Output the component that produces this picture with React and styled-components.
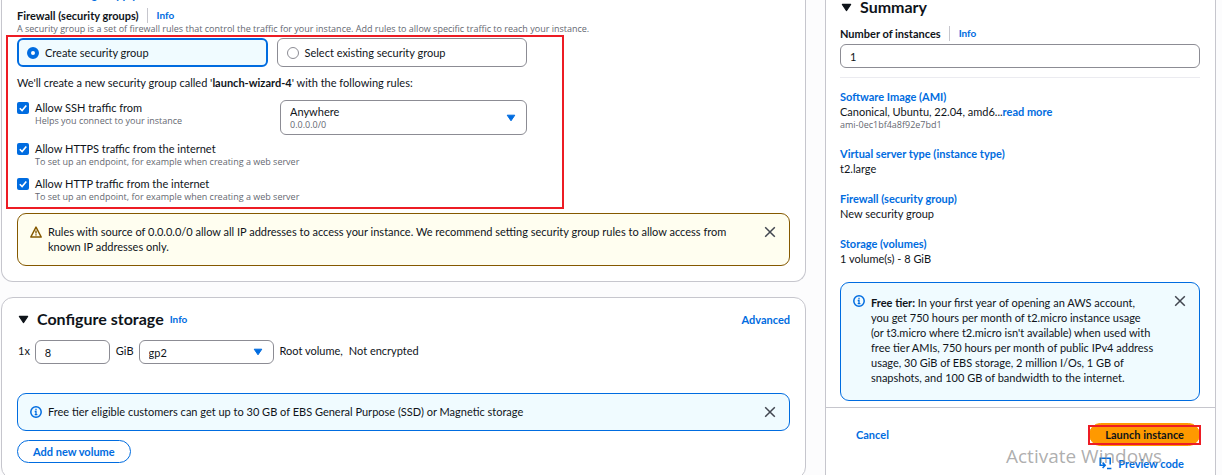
import React from "react";
import styled, { createGlobalStyle, css } from "styled-components";

const blue = "#006ce0";
const grey = "#656871";
const line = "#c6c6cd";
const inputLine = "#8c8c94";
const annotation = "#ed1c24";

const GlobalStyle = createGlobalStyle`
  *, *::before, *::after { box-sizing: border-box; }
  html, body { margin: 0; background: #fcfcfd; }
  body, button, input, select {
    font-family: "Amazon Ember", Lato, "Open Sans", sans-serif;
    font-size: 11px;
    line-height: 15px;
    color: #0f141a;
  }
  a { color: ${blue}; text-decoration: none; font-weight: 700; }
  p, h2, h3, dl, dd, dt { margin: 0; }
`;

const Page = styled.div`
  position: relative;
  display: grid;
  grid-template-columns: minmax(0, 1fr) 391px;
  gap: 19px;
  height: 100vh;
  overflow: hidden;
  padding: 0 6px 0 1px;
`;

const Column = styled.main`
  display: flex;
  flex-direction: column;
  gap: 15px;
`;

const Card = styled.section`
  flex: none;
  position: relative;
  background: #fff;
  border: 1px solid ${line};
  border-radius: 12px;
  padding: 12px 15px 15px;
  ${(p) => p.$continued && css`
    border-top: 0;
    border-radius: 0 0 12px 12px;
    padding-top: 0;
  `}
`;

const ScrolledLine = styled.div`
  display: flex;
  align-items: flex-end;
  height: 2px;
  margin-bottom: 6px;
  overflow: hidden;
`;

const FieldHeading = styled.div`
  display: flex;
  align-items: center;
  height: 15px;
`;

const FieldLabel = styled.label`
  font-weight: 700;
  padding-right: 8px;
  margin-right: 9px;
  border-right: 1px solid ${line};
`;

const InfoLink = styled.a`
  font-size: 10px;
`;

const Hint = styled.span`
  display: block;
  font-family: "Amazon Ember", "Open Sans", sans-serif;
  font-size: 9px;
  line-height: 12px;
  color: ${grey};
`;

const Tiles = styled.div`
  display: grid;
  grid-template-columns: 1fr 1fr;
  gap: 9px;
  max-width: 510px;
  margin: 3px 0 8px;
`;

const Tile = styled.label`
  display: flex;
  align-items: center;
  gap: 6px;
  height: 29px;
  padding: 0 9px;
  border: 1px solid ${inputLine};
  border-radius: 6px;
  ${(p) => p.$selected && css`
    background: #f0fbff;
    border: 2px solid ${blue};
    padding: 0 8px;
  `}
`;

const Radio = styled.input`
  appearance: none;
  flex: none;
  width: 12px;
  height: 12px;
  margin: 0;
  border: 1px solid ${inputLine};
  border-radius: 50%;
  background: #fff;
  &:checked { border: 4px solid ${blue}; }
`;

const Rules = styled.div`
  display: grid;
  grid-template-columns: 1fr 247px;
  row-gap: 6px;
  max-width: 510px;
  margin: 10px 0 8px;
`;

const Rule = styled.div`
  display: grid;
  grid-template-columns: 12px 1fr;
  column-gap: 6px;
  align-content: start;
  padding-bottom: 2px;
  ${(p) => p.$wide && css`grid-column: 1 / -1;`}
`;

const TickBox = styled.span`
  display: grid;
  width: 12px;
  height: 12px;
  margin-top: 2px;
  > * { grid-area: 1 / 1; }
  svg { pointer-events: none; }
`;

const TickInput = styled.input`
  appearance: none;
  width: 12px;
  height: 12px;
  margin: 0;
  border-radius: 2px;
  background: ${blue};
`;

const SelectBox = styled.div`
  display: grid;
  align-items: center;
  width: ${(p) => p.$width || "auto"};
  > * { grid-area: 1 / 1; }
  svg { justify-self: end; margin-right: 11px; pointer-events: none; }
`;

const Select = styled.select`
  appearance: none;
  width: 100%;
  height: ${(p) => (p.$tall ? 35 : 24)}px;
  margin: 0;
  padding: ${(p) => (p.$tall ? "0 9px 12px" : "0 9px")};
  border: 1px solid ${inputLine};
  border-radius: 6px;
  background: #fff;
`;

const SelectDetail = styled(Hint)`
  align-self: end;
  padding: 0 0 4px 10px;
  pointer-events: none;
`;

const Input = styled.input`
  width: ${(p) => p.$width || "100%"};
  height: 24px;
  padding: 0 9px;
  border: 1px solid ${inputLine};
  border-radius: 6px;
  background: #fff;
`;

const Alert = styled.div`
  display: flex;
  align-items: flex-start;
  gap: 6px;
  padding: 10px 12px 11px;
  border: 1px solid ${(p) => (p.$warning ? "#855900" : blue)};
  border-radius: 9px;
  background: ${(p) => (p.$warning ? "#fffef0" : "#f0fbff")};
  > svg { flex: none; margin-top: 2px; }
`;

const AlertText = styled.p`
  flex: 1;
  max-width: ${(p) => p.$max || "none"};
  ${(p) => p.$roomy && css`padding: 2px 0 4px;`}
`;

const CloseButton = styled.button`
  display: flex;
  margin: 2px 1px 0 auto;
  padding: 0;
  border: 0;
  background: none;
`;

const CardHeader = styled.header`
  display: flex;
  align-items: center;
  height: 18px;
  padding-left: 1px;
  h2 { font-size: 16px; line-height: 18px; margin: 0 6px 0 8px; }
  > a:last-child { margin-left: auto; }
`;

const VolumeRow = styled.div`
  display: flex;
  align-items: center;
  gap: 5px;
  margin: 12px 0 29px;
`;

const VolumeText = styled.span`
  padding: 0 0 4px 1px;
`;

const PillButton = styled.button`
  height: 23px;
  padding: 0 15px;
  border: 1px solid ${blue};
  border-radius: 12px;
  background: #fff;
  color: ${blue};
  font-weight: 700;
  white-space: nowrap;
  ${(p) => p.$primary && css`
    border-color: #ff9900;
    background: #ff9900;
    color: #0f141a;
  `}
`;

const AddRow = styled.div`
  margin-top: 9px;
`;

const Summary = styled.aside`
  position: relative;
  background: #fff;
  border: solid ${line};
  border-width: 0 1px;
`;

const SummaryBody = styled.div`
  padding: 0 15px 6px 14px;
`;

const SummaryHeader = styled(CardHeader)`
  height: 14px;
  margin-bottom: 12px;
`;

const CountInput = styled(Input)`
  display: block;
  margin-top: 3px;
`;

const Divider = styled.hr`
  height: 1px;
  margin: 9px 0 11px;
  border: 0;
  background: #ebebf0;
`;

const Facts = styled.dl`
  display: flex;
  flex-direction: column;
  gap: 15px;
  margin-bottom: 16px;
`;

const Footer = styled.footer`
  display: grid;
  grid-template-columns: 1fr auto;
  align-items: center;
  row-gap: 6px;
  padding: 15px 15px 0 30px;
  border-top: 1px solid ${line};
`;

const Marked = styled.span`
  position: relative;
  display: flex;
  &::after {
    content: "";
    position: absolute;
    inset: 2px -1px 1px -1px;
    border: 2px solid ${annotation};
    pointer-events: none;
  }
`;

const PreviewLink = styled.a`
  grid-column: 2;
  justify-self: end;
  display: flex;
  align-items: center;
  gap: 6px;
  padding-right: 16px;
  height: 23px;
`;

const RegionMark = styled.div`
  position: absolute;
  left: 4px;
  top: 35px;
  width: 558px;
  height: 174px;
  border: 2px solid ${annotation};
  pointer-events: none;
`;

const Watermark = styled.div`
  position: absolute;
  right: 6px;
  bottom: -18px;
  width: 210px;
  font-family: "Segoe UI", "Open Sans", sans-serif;
  color: rgba(130, 130, 130, 0.65);
  pointer-events: none;
  strong { display: block; font-size: 19px; line-height: 26px; font-weight: 400; }
  span { display: block; font-size: 13px; line-height: 24px; white-space: nowrap; }
`;

const Caret = ({ color = blue, size = 10 }) => (
  <svg width={size} height={size} viewBox="0 0 10 10" aria-hidden="true">
    <path d="M1.2 2.2h7.6L5 7.8z" fill={color} stroke={color} strokeWidth="1" strokeLinejoin="round" />
  </svg>
);

const Cross = () => (
  <svg width="12" height="12" viewBox="0 0 12 12" aria-hidden="true">
    <path d="M1.2 1.2l9.6 9.6M10.8 1.2L1.2 10.8" stroke="#424650" strokeWidth="1.5" fill="none" />
  </svg>
);

const InfoIcon = () => (
  <svg width="12" height="12" viewBox="0 0 12 12" aria-hidden="true">
    <circle cx="6" cy="6" r="5.2" fill="none" stroke={blue} strokeWidth="1.5" />
    <path d="M6 2.8v1.4M4.7 5.5H6v3.2M4.7 8.7h2.7" fill="none" stroke={blue} strokeWidth="1.3" />
  </svg>
);

const WarningIcon = () => (
  <svg width="12" height="12" viewBox="0 0 12 12" aria-hidden="true">
    <path d="M6 1.1L11.2 11H.8z" fill="none" stroke="#855900" strokeWidth="1.5" strokeLinejoin="round" />
    <path d="M6 4.4v3M6 8.2v1.4" stroke="#855900" strokeWidth="1.4" />
  </svg>
);

const CodeIcon = () => (
  <svg width="13" height="13" viewBox="0 0 13 13" aria-hidden="true">
    <path d="M11.2 7.5V1.2H1.2v7h4.6M3.6 5.6l2.6 2.6-2.6 2.8M8 11.6h4.4" fill="none" stroke={blue} strokeWidth="1.5" />
  </svg>
);

const Tick = ({ id }) => (
  <TickBox>
    <TickInput type="checkbox" id={id} defaultChecked />
    <svg width="12" height="12" viewBox="0 0 12 12" aria-hidden="true">
      <path d="M2.8 6.2l2.3 2.3 4.2-5" fill="none" stroke="#fff" strokeWidth="1.6" />
    </svg>
  </TickBox>
);

const TrafficRule = ({ id, label, hint, wide }) => (
  <Rule $wide={wide}>
    <Tick id={id} />
    <div>
      <label htmlFor={id}>{label}</label>
      <Hint>{hint}</Hint>
    </div>
  </Rule>
);

const Close = () => (
  <CloseButton type="button" aria-label="Dismiss"><Cross /></CloseButton>
);

const Fact = ({ name, children }) => (
  <div>
    <dt><a href="#">{name}</a></dt>
    <dd>{children}</dd>
  </div>
);

export default function App() {
  return (
    <>
      <GlobalStyle />
      <Page>
        <Column>
          <Card $continued>
            <ScrolledLine><a href="#">Additional charges apply</a></ScrolledLine>
            <FieldHeading>
              <FieldLabel as="span" id="firewall">Firewall (security groups)</FieldLabel>
              <InfoLink href="#">Info</InfoLink>
            </FieldHeading>
            <Hint>
              A security group is a set of firewall rules that control the traffic for your instance. Add rules to
              allow specific traffic to reach your instance.
            </Hint>
            <Tiles role="radiogroup" aria-labelledby="firewall">
              <Tile $selected>
                <Radio type="radio" name="group" defaultChecked />
                Create security group
              </Tile>
              <Tile>
                <Radio type="radio" name="group" />
                Select existing security group
              </Tile>
            </Tiles>
            <p>
              We'll create a new security group called '<b>launch-wizard-4</b>' with the following rules:
            </p>
            <Rules>
              <TrafficRule id="ssh" label="Allow SSH traffic from" hint="Helps you connect to your instance" />
              <SelectBox>
                <Select $tall aria-label="SSH source"><option>Anywhere</option></Select>
                <SelectDetail>0.0.0.0/0</SelectDetail>
                <Caret />
              </SelectBox>
              <TrafficRule
                wide
                id="https"
                label="Allow HTTPS traffic from the internet"
                hint="To set up an endpoint, for example when creating a web server"
              />
              <TrafficRule
                wide
                id="http"
                label="Allow HTTP traffic from the internet"
                hint="To set up an endpoint, for example when creating a web server"
              />
            </Rules>
            <Alert $warning>
              <WarningIcon />
              <AlertText $max="680px">
                Rules with source of 0.0.0.0/0 allow all IP addresses to access your instance. We recommend setting
                security group rules to allow access from known IP addresses only.
              </AlertText>
              <Close />
            </Alert>
            <RegionMark />
          </Card>

          <Card>
            <CardHeader>
              <Caret color="#0f141a" size={11} />
              <h2>Configure storage</h2>
              <InfoLink href="#">Info</InfoLink>
              <a href="#">Advanced</a>
            </CardHeader>
            <VolumeRow>
              <VolumeText>1x</VolumeText>
              <Input $width="75px" aria-label="Size in GiB" defaultValue="8" />
              <VolumeText>GiB</VolumeText>
              <SelectBox $width="135px">
                <Select aria-label="Volume type"><option>gp2</option></Select>
                <Caret />
              </SelectBox>
              <VolumeText>Root volume,</VolumeText>
              <VolumeText>Not encrypted</VolumeText>
            </VolumeRow>
            <Alert>
              <InfoIcon />
              <AlertText>
                Free tier eligible customers can get up to 30 GB of EBS General Purpose (SSD) or Magnetic storage
              </AlertText>
              <Close />
            </Alert>
            <AddRow>
              <PillButton type="button">Add new volume</PillButton>
            </AddRow>
          </Card>
        </Column>

        <Summary>
          <SummaryBody>
            <SummaryHeader>
              <Caret color="#0f141a" size={11} />
              <h2>Summary</h2>
            </SummaryHeader>
            <FieldHeading>
              <FieldLabel htmlFor="count">Number of instances</FieldLabel>
              <InfoLink href="#">Info</InfoLink>
            </FieldHeading>
            <CountInput id="count" defaultValue="1" />
            <Divider />
            <Facts>
              <Fact name="Software Image (AMI)">
                Canonical, Ubuntu, 22.04, amd6...<a href="#">read more</a>
                <Hint>ami-0ec1bf4a8f92e7bd1</Hint>
              </Fact>
              <Fact name="Virtual server type (instance type)">t2.large</Fact>
              <Fact name="Firewall (security group)">New security group</Fact>
              <Fact name="Storage (volumes)">1 volume(s) - 8 GiB</Fact>
            </Facts>
            <Alert>
              <InfoIcon />
              <AlertText $max="283px" $roomy>
                <b>Free tier:</b> In your first year of opening an AWS account, you get 750 hours per month of
                t2.micro instance usage (or t3.micro where t2.micro isn't available) when used with free tier AMIs,
                750 hours per month of public IPv4 address usage, 30 GiB of EBS storage, 2 million I/Os, 1 GB of
                snapshots, and 100 GB of bandwidth to the internet.
              </AlertText>
              <Close />
            </Alert>
          </SummaryBody>
          <Footer>
            <a href="#">Cancel</a>
            <Marked><PillButton $primary type="button">Launch instance</PillButton></Marked>
            <PreviewLink href="#"><CodeIcon />Preview code</PreviewLink>
          </Footer>
        </Summary>

        <Watermark>
          <strong>Activate Windows</strong>
          <span>Go to Settings to activate Windows.</span>
        </Watermark>
      </Page>
    </>
  );
}
